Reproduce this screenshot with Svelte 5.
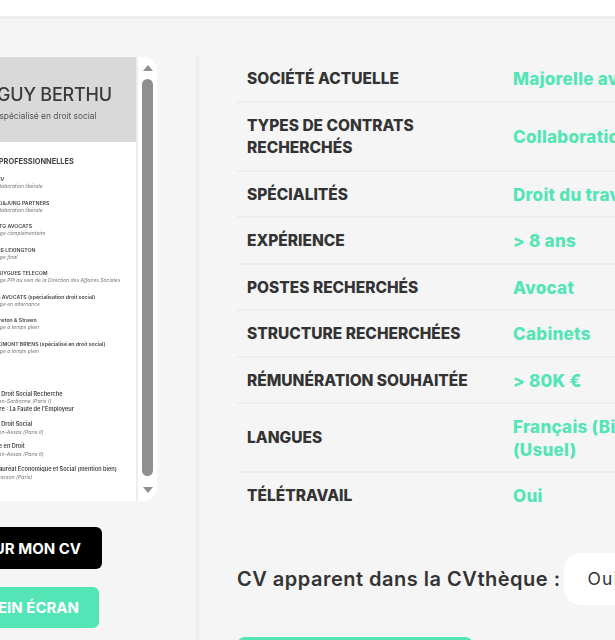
<script>
  const experiences = [
    ['AMV', 'Collaboration libérale'],
    ['ALO&JUNG PARTNERS', 'Collaboration libérale'],
    ['CBTG AVOCATS', 'Stage complémentaire'],
    ['CMS LEXINGTON', 'Stage final'],
    ['BOUYGUES TELECOM', 'Stage PPI au sein de la Direction des Affaires Sociales'],
    ['DIS AVOCATS (spécialisation droit social)', 'Stage en alternance'],
    ['Winston & Strawn', 'Stage à temps plein'],
    ['FROMONT BRIENS (spécialisé en droit social)', 'Stage à temps plein']
  ]

  const rows = [
    ['SOCIÉTÉ ACTUELLE', 'Majorelle avocats'],
    ['TYPES DE CONTRATS RECHERCHÉS', 'Collaboration libérale'],
    ['SPÉCIALITÉS', 'Droit du travail'],
    ['EXPÉRIENCE', '> 8 ans'],
    ['POSTES RECHERCHÉS', 'Avocat'],
    ['STRUCTURE RECHERCHÉES', 'Cabinets'],
    ['RÉMUNÉRATION SOUHAITÉE', '> 80K €'],
    ['LANGUES', 'Français (Bilingue) Anglais\n(Usuel)'],
    ['TÉLÉTRAVAIL', 'Oui']
  ]
</script>

<header></header>

<main>
  <section class="left">
    <div class="viewer">
      <div class="doc">
        <div class="doc-head">
          <h1>GUY BERTHU</h1>
          <p>Avocat spécialisé en droit social</p>
        </div>
        <h2>EXPÉRIENCES PROFESSIONNELLES</h2>
        {#each experiences as e}
          <div class="exp">
            <b>{e[0]}</b>
            <i>{e[1]}</i>
          </div>
        {/each}
        <div class="formations">
          <div class="exp"><b>Master Droit Social Recherche</b><i>Panthéon-Sorbonne (Paris I)</i><b>Mémoire : La Faute de l'Employeur</b></div>
          <div class="exp"><b>Master Droit Social</b><i>Panthéon-Assas (Paris II)</i></div>
          <div class="exp"><b>Licence en Droit</b><i>Panthéon-Assas (Paris II)</i></div>
          <div class="exp"><b>Baccalauréat Economique et Social (mention bien)</b><i>Lycée Carson (Paris)</i></div>
        </div>
      </div>
      <div class="scrollbar">
        <span class="arrow up"></span>
        <span class="thumb"></span>
        <span class="arrow down"></span>
      </div>
    </div>
    <button class="btn black">CLIQUEZ SUR MON CV</button>
    <button class="btn green">VOIR EN PLEIN ÉCRAN</button>
  </section>

  <section class="right">
    <div class="rows">
      {#each rows as r}
        <div class="row">
          <div class="label">{r[0]}</div>
          <div class="value">{r[1]}</div>
        </div>
      {/each}
    </div>
    <div class="apparent">
      <span>CV apparent dans la CVthèque :</span>
      <div class="select">Oui</div>
    </div>
    <button class="btn green save">ENREGISTRER</button>
  </section>
</main>

<style>
  :global(body) {
    background: #f5f5f5;
    overflow: hidden;
    font-family: Inter, "Liberation Sans", sans-serif;
  }

  header {
    height: 16px;
    background: #fff;
    border-bottom: 3px solid #ededed;
  }

  main {
    display: flex;
    width: 1100px;
    height: 621px;
    margin-left: -120px;
    padding-top: 38px;
    box-sizing: border-box;
    overflow: hidden;
  }

  .left {
    width: 319px;
    flex: none;
    display: flex;
    flex-direction: column;
    align-items: flex-end;
    padding-right: 39px;
    box-sizing: border-box;
    border-right: 3px solid #ededed;
  }

  .viewer {
    display: flex;
    height: 444px;
    width: 277px;
    flex: none;
    background: #fff;
    border-radius: 0 14px 14px 0;
    overflow: hidden;
  }

  .doc {
    width: 258px;
    flex: none;
    box-sizing: border-box;
    background: #fff;
    border-right: 2px solid #ededed;
    color: #444;
    overflow: hidden;
  }

  .doc > * {
    filter: blur(0.35px);
  }

  .doc-head {
    background: #d9d9d9;
    height: 85px;
    box-sizing: border-box;
    padding: 27px 0 0 30px;
  }

  h1 {
    margin: 0;
    font-size: 18px;
    line-height: 22px;
    font-weight: 500;
    letter-spacing: -0.2px;
    color: #3a3a3a;
    white-space: nowrap;
    padding-left: 87px;
  }

  .doc-head p {
    margin: 5px 0 0;
    font-size: 8.4px;
    line-height: 11px;
    color: #555;
    white-space: nowrap;
    padding-left: 60px;
  }

  h2 {
    margin: 14.5px 0 10.5px 66px;
    font-size: 7.4px;
    line-height: 9px;
    font-weight: 700;
    white-space: nowrap;
  }

  .exp {
    padding-left: 112px;
    margin-bottom: 9.5px;
    white-space: nowrap;
  }

  .exp b, .exp i {
    display: block;
    font-size: 5.2px;
    line-height: 7px;
    font-weight: 600;
  }

  .exp i {
    font-size: 5px;
    color: #777;
    font-weight: 400;
  }

  .formations {
    margin-top: 36px;
  }

  .formations .exp {
    padding-left: 101px;
    margin-bottom: 7px;
  }

  .formations .exp b, .formations .exp i {
    line-height: 7.8px;
  }

  .formations .exp b {
    font-size: 5.6px;
  }

  .formations .exp i {
    font-size: 5.2px;
  }

  .scrollbar {
    flex: 1;
    display: flex;
    flex-direction: column;
    align-items: center;
    padding: 8px 0;
    box-sizing: border-box;
  }

  .thumb {
    width: 11px;
    flex: 1;
    margin: 8px 0 11px;
    border-radius: 6px;
    background: #8f8f8f;
  }

  .arrow {
    width: 0;
    height: 0;
    border-left: 5px solid transparent;
    border-right: 5px solid transparent;
  }

  .arrow.up {
    border-bottom: 6px solid #8f8f8f;
  }

  .arrow.down {
    border-top: 6px solid #8f8f8f;
  }

  .btn {
    border: none;
    border-radius: 6px;
    font-family: Inter, sans-serif;
    font-weight: 700;
    font-size: 15px;
    color: #fff;
    white-space: nowrap;
    flex: none;
  }

  .btn.black {
    background: #000;
    height: 42px;
    width: 222px;
    margin: 26px 55px 0 0;
    text-align: right;
    padding-right: 21px;
  }

  .btn.green {
    background: #54e5b7;
  }

  .left .btn.green {
    height: 41px;
    width: 222px;
    margin: 18px 58px 0 0;
    text-align: right;
    padding-right: 20px;
  }

  .right {
    padding-left: 38px;
    width: 700px;
    flex: none;
    box-sizing: border-box;
  }

  .rows {
    width: 660px;
    margin-top: -1px;
  }

  .row {
    display: grid;
    grid-template-columns: 276px 1fr;
    align-items: center;
    padding: 12px 0 10px;
    border-bottom: 2px solid #ededed;
  }

  .row:last-child {
    border-bottom: none;
  }

  .label {
    padding: 0 40px 0 10px;
    font-size: 15.5px;
    line-height: 22.5px;
    font-weight: 800;
    color: #333;
  }

  .value {
    font-size: 17px;
    line-height: 22.5px;
    font-weight: 800;
    letter-spacing: 0.3px;
    color: #54e5b7;
    white-space: pre-line;
  }

  .apparent {
    display: flex;
    align-items: center;
    gap: 3px;
    margin-top: 35px;
    font-size: 20px;
    font-weight: 600;
    letter-spacing: 0.5px;
    color: #333;
    white-space: nowrap;
  }

  .select {
    background: #fff;
    border-radius: 16px;
    height: 52px;
    width: 200px;
    line-height: 52px;
    padding-left: 24px;
    font-size: 17.5px;
    font-weight: 400;
    letter-spacing: 1.2px;
  }

  .btn.save {
    display: block;
    margin-top: 32px;
    width: 236px;
    height: 44px;
    border-radius: 8px;
  }
</style>
